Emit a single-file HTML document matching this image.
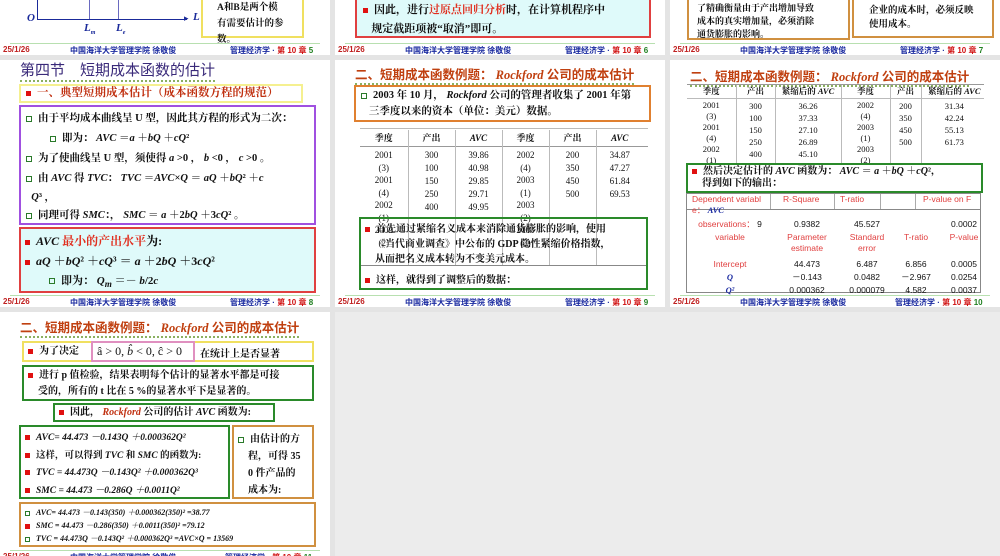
<!DOCTYPE html>
<html><head><meta charset="utf-8"><style>
*{margin:0;padding:0;box-sizing:border-box}
body{width:1000px;height:556px;background:#e4e4e4;position:relative;overflow:hidden;font-family:"Liberation Serif","Noto Serif CJK SC",serif;color:#111}
.s{position:absolute;background:#fff;overflow:hidden}
.a{position:absolute;white-space:nowrap}
.b{position:absolute}
.ft{position:absolute;font-family:"Liberation Sans","Noto Sans CJK SC",sans-serif;font-weight:bold;font-size:8px;white-space:nowrap}
.gl{position:absolute;height:1px;background:#b8e0b0}
.sq{display:inline-block;width:5px;height:5px;background:#e01010;margin-right:6px;vertical-align:middle}
.hq{display:inline-block;width:6px;height:6px;border:1px solid #2a7a2a;margin-right:6px;vertical-align:middle}
.title{position:absolute;font-family:"Liberation Serif","Noto Sans CJK SC",sans-serif;font-weight:bold;font-size:12.5px;color:#c04010;white-space:nowrap;border-bottom:2px dotted #8ab060}
i{font-style:italic}
table{border-collapse:collapse}
</style></head><body>

<!-- Row 1 -->
<div class="s" style="left:0;top:0;width:330px;height:55px">
 <div class="b" style="left:37px;top:0;width:1px;height:20px;background:#1a2a9a"></div>
 <div class="b" style="left:37px;top:19px;width:150px;height:1px;background:#1a2a9a"></div>
 <div class="a" style="left:184px;top:13px;font-size:9px;color:#1a2a9a">▸</div>
 <div class="b" style="left:89px;top:0;width:1px;height:19px;background:#6a6ac0"></div>
 <div class="b" style="left:118px;top:0;width:1px;height:19px;background:#6a6ac0"></div>
 <div class="a" style="left:27px;top:12px;font-size:11px;font-weight:bold;font-style:italic;color:#1a2a9a">O</div>
 <div class="a" style="left:193px;top:11px;font-size:11px;font-weight:bold;font-style:italic;color:#1a2a9a">L</div>
 <div class="a" style="left:84px;top:22px;font-size:11px;font-weight:bold;font-style:italic;color:#1a2a9a">L<sub style="font-size:6px">m</sub></div>
 <div class="a" style="left:116px;top:22px;font-size:11px;font-weight:bold;font-style:italic;color:#1a2a9a">L<sub style="font-size:6px">e</sub></div>
 <div class="b" style="left:201px;top:-3px;width:103px;height:41px;border:2px solid #f0e060;font-size:9.5px;font-weight:bold;padding:1px 14px;line-height:16px">A和B是两个模<br>有需要估计的参<br>数。</div>
 <div class="gl" style="left:10px;top:43px;width:310px"></div>
 <div class="ft" style="left:3px;top:45px;color:#c02020">25/1/26</div>
 <div class="ft" style="left:70px;top:45px;color:#1a2aa0">中国海洋大学管理学院 徐敬俊</div>
 <div class="ft" style="left:230px;top:45px;color:#1a2aa0">管理经济学 · <span style="color:#d01010">第 10 章</span> <span style="color:#208020">5</span></div>
</div>

<div class="s" style="left:335px;top:0;width:330px;height:55px">
 <div class="b" style="left:20px;top:-3px;width:296px;height:41px;border:2px solid #e04040;background:#dffafa;font-size:11px;font-weight:bold;padding:2px 6px;line-height:19px"><span class="sq"></span>因此，进行<span style="color:#e03020">过原点回归分析</span>时，在计算机程序中<br>&nbsp;&nbsp;&nbsp;规定截距项被“取消”即可。</div>
 <div class="gl" style="left:10px;top:43px;width:310px"></div>
 <div class="ft" style="left:3px;top:45px;color:#c02020">25/1/26</div>
 <div class="ft" style="left:70px;top:45px;color:#1a2aa0">中国海洋大学管理学院 徐敬俊</div>
 <div class="ft" style="left:230px;top:45px;color:#1a2aa0">管理经济学 · <span style="color:#d01010">第 10 章</span> <span style="color:#208020">6</span></div>
</div>

<div class="s" style="left:670px;top:0;width:330px;height:55px">
 <div class="b" style="left:17px;top:-3px;width:163px;height:43px;border:2px solid #d09040;font-size:9px;font-weight:bold;padding:3px 8px;line-height:13px">了精确衡量由于产出增加导致<br>成本的真实增加量，必须消除<br>通货膨胀的影响。</div>
 <div class="b" style="left:182px;top:-3px;width:142px;height:41px;border:2px solid #d09040;font-size:9.5px;font-weight:bold;padding:5px 15px;line-height:14px">企业的成本时，必须反映<br>使用成本。</div>
 <div class="gl" style="left:10px;top:43px;width:310px"></div>
 <div class="ft" style="left:3px;top:45px;color:#c02020">25/1/26</div>
 <div class="ft" style="left:70px;top:45px;color:#1a2aa0">中国海洋大学管理学院 徐敬俊</div>
 <div class="ft" style="left:230px;top:45px;color:#1a2aa0">管理经济学 · <span style="color:#d01010">第 10 章</span> <span style="color:#208020">7</span></div>
</div>

<!-- Slide 8 -->
<div class="s" style="left:0;top:60px;width:330px;height:247px">
 <div class="a" style="left:20px;top:2px;font-size:15px;color:#3a2a7a;font-family:'Liberation Sans','Noto Sans CJK SC',sans-serif;border-bottom:2px dotted #8ab060;line-height:18px">第四节　短期成本函数的估计</div>
 <div class="b" style="left:19px;top:24px;width:284px;height:19px;border:2px solid #f5f090;font-size:11.5px;font-weight:bold;color:#c03010;padding:0 5px;line-height:15px"><span class="sq"></span>一、典型短期成本估计（成本函数方程的规范）</div>
 <div class="b" style="left:19px;top:45px;width:297px;height:120px;border:2px solid #a050e0;font-size:10.5px;font-weight:bold;padding:2px 5px;line-height:20px">
  <div><span class="hq"></span>由于平均成本曲线呈 U 型，因此其方程的形式为二次：</div>
  <div style="padding-left:24px"><span class="hq"></span>即为： <i>AVC</i> ＝<i>a</i> ＋<i>bQ</i> ＋<i>cQ</i>²</div>
  <div><span class="hq"></span>为了使曲线呈 U 型，须使得 <i>a</i> &gt;0 ，  <i>b</i> &lt;0 ，  <i>c</i> &gt;0 。</div>
  <div><span class="hq"></span>由 <i>AVC</i> 得 <i>TVC</i>：  <i>TVC</i> ＝<i>AVC</i>×<i>Q</i> ＝ <i>aQ</i> ＋<i>bQ</i>² ＋<i>c</i></div>
  <div style="line-height:17px">&nbsp;&nbsp;<i>Q</i>³ ，</div>
  <div><span class="hq"></span>同理可得 <i>SMC</i>：，  <i>SMC</i> ＝ <i>a</i> ＋2<i>bQ</i> ＋3<i>cQ</i>² 。</div>
 </div>
 <div class="b" style="left:19px;top:167px;width:297px;height:66px;border:2px solid #e04040;background:#dffafa;font-size:12px;font-weight:bold;padding:2px 4px;line-height:20px">
  <div><span class="sq"></span><i>AVC</i> <span style="color:#e03020">最小的产出水平</span>为:</div>
  <div><span class="sq"></span><i>aQ</i> ＋<i>bQ</i>² ＋<i>cQ</i>³ ＝ <i>a</i> ＋2<i>bQ</i> ＋3<i>cQ</i>²</div>
  <div style="padding-left:24px;font-size:11px"><span class="hq"></span>即为：  <i>Q<sub>m</sub></i> ＝－ <i>b</i>/2<i>c</i></div>
 </div>
 <div class="gl" style="left:10px;top:235px;width:310px"></div>
 <div class="ft" style="left:3px;top:237px;color:#c02020">25/1/26</div>
 <div class="ft" style="left:70px;top:237px;color:#1a2aa0">中国海洋大学管理学院 徐敬俊</div>
 <div class="ft" style="left:230px;top:237px;color:#1a2aa0">管理经济学 · <span style="color:#d01010">第 10 章</span> <span style="color:#208020">8</span></div>
</div>

<!-- Slide 9 -->
<div class="s" style="left:335px;top:60px;width:330px;height:247px">
 <div class="title" style="left:20px;top:4px">二、短期成本函数例题： <i>Rockford</i> 公司的成本估计</div>
 <div class="b" style="left:19px;top:25px;width:297px;height:37px;border:2px solid #e08030;font-size:10.5px;font-weight:bold;padding:1px 5px;line-height:16px"><span class="hq"></span>2003 年 10 月， <i>Rockford</i> 公司的管理者收集了 2001 年第<br>&nbsp;&nbsp;&nbsp;三季度以来的资本（单位：美元）数据。</div>
 <div class="b" style="left:25px;top:68px;width:288px;height:1px;background:#bbb"></div>
 <div class="b" style="left:25px;top:86px;width:288px;height:1px;background:#999"></div>
 <div class="b" style="left:25px;top:205px;width:288px;height:1px;background:#888"></div>
 <div class="a" style="left:25px;top:70px;font-size:9px">
  <table style="font-size:9px;line-height:12.5px;text-align:center">
   <tr style="font-weight:bold;height:17px"><td style="width:48px">季度</td><td style="width:47px;border-left:1px solid #bbb">产出</td><td style="width:47px;border-left:1px solid #bbb"><i>AVC</i></td><td style="width:47px;border-left:1px solid #bbb">季度</td><td style="width:47px;border-left:1px solid #bbb">产出</td><td style="width:47px;border-left:1px solid #bbb"><i>AVC</i></td></tr>
   <tr><td style="vertical-align:top;padding-top:2px">2001<br>(3)<br>2001<br>(4)<br>2002<br>(1)<br>2002<br>(2)</td>
   <td style="border-left:1px solid #bbb;vertical-align:top;padding-top:2px;line-height:13px">300<br>100<br>150<br>250<br>400</td>
   <td style="border-left:1px solid #bbb;vertical-align:top;padding-top:2px;line-height:13px">39.86<br>40.98<br>29.85<br>29.71<br>49.95</td>
   <td style="border-left:1px solid #bbb;vertical-align:top;padding-top:2px">2002<br>(4)<br>2003<br>(1)<br>2003<br>(2)<br>2003<br>(3)</td>
   <td style="border-left:1px solid #bbb;vertical-align:top;padding-top:2px;line-height:13px">200<br>350<br>450<br>500</td>
   <td style="border-left:1px solid #bbb;vertical-align:top;padding-top:2px;line-height:13px;height:118px">34.87<br>47.27<br>61.84<br>69.53</td></tr>
  </table>
 </div>
 <div class="b" style="left:24px;top:157px;width:289px;height:73px;border:2px solid #2a8a2a;font-size:10px;font-weight:bold;padding:3px 4px;line-height:15px"><span class="sq"></span>首先通过紧缩名义成本来消除通货膨胀的影响，使用<br>&nbsp;&nbsp;&nbsp;&nbsp;《当代商业调查》中公布的 GDP 隐性紧缩价格指数，<br>&nbsp;&nbsp;&nbsp;&nbsp;从而把名义成本转为不变美元成本。<div style="margin-top:6px"><span class="sq"></span>这样，就得到了调整后的数据：</div></div>
 <div class="gl" style="left:10px;top:235px;width:310px"></div>
 <div class="ft" style="left:3px;top:237px;color:#c02020">25/1/26</div>
 <div class="ft" style="left:70px;top:237px;color:#1a2aa0">中国海洋大学管理学院 徐敬俊</div>
 <div class="ft" style="left:230px;top:237px;color:#1a2aa0">管理经济学 · <span style="color:#d01010">第 10 章</span> <span style="color:#208020">9</span></div>
</div>

<!-- Slide 10 -->
<div class="s" style="left:670px;top:60px;width:330px;height:247px">
 <div class="title" style="left:20px;top:6px">二、短期成本函数例题： <i>Rockford</i> 公司的成本估计</div>
 <div class="b" style="left:17px;top:24px;width:297px;height:1px;background:#999"></div>
 <div class="b" style="left:17px;top:38px;width:297px;height:1px;background:#bbb"></div>
 <div class="a" style="left:17px;top:25px">
  <table style="font-size:8.5px;line-height:11px;text-align:center">
   <tr style="font-weight:bold;height:13px"><td style="width:49px">季度</td><td style="width:39px;border-left:1px solid #bbb">产出</td><td style="width:66px;border-left:1px solid #bbb">紧缩后的 <i>AVC</i></td><td style="width:49px;border-left:1px solid #bbb">季度</td><td style="width:31px;border-left:1px solid #bbb">产出</td><td style="width:66px;border-left:1px solid #bbb">紧缩后的 <i>AVC</i></td></tr>
   <tr><td style="vertical-align:top;padding-top:2px">2001<br>(3)<br>2001<br>(4)<br>2002<br>(1)</td>
   <td style="border-left:1px solid #bbb;vertical-align:top;padding-top:2px;line-height:12px">300<br>100<br>150<br>250<br>400</td>
   <td style="border-left:1px solid #bbb;vertical-align:top;padding-top:2px;line-height:12px">36.26<br>37.33<br>27.10<br>26.89<br>45.10</td>
   <td style="border-left:1px solid #bbb;vertical-align:top;padding-top:2px">2002<br>(4)<br>2003<br>(1)<br>2003<br>(2)</td>
   <td style="border-left:1px solid #bbb;vertical-align:top;padding-top:2px;line-height:12px">200<br>350<br>450<br>500</td>
   <td style="border-left:1px solid #bbb;vertical-align:top;padding-top:2px;line-height:12px;height:64px">31.34<br>42.24<br>55.13<br>61.73</td></tr>
  </table>
 </div>
 <div class="b" style="left:16px;top:103px;width:297px;height:30px;border:2px solid #2a8a2a;font-size:10px;font-weight:bold;padding:1px 4px;line-height:12px;background:#fff"><span class="sq"></span>然后决定估计的 <i>AVC</i> 函数为： <i>AVC</i> ＝ <i>a</i> ＋<i>bQ</i> ＋<i>cQ</i>²，<br>&nbsp;&nbsp;&nbsp;&nbsp;得到如下的输出：</div>
 <div class="b" style="left:16px;top:133px;width:295px;height:100px;border:1px solid #888"></div>
 <div class="b" style="left:16px;top:149px;width:295px;height:1px;background:#888"></div>
 <div class="a" style="left:22px;top:134px;font-family:'Liberation Sans',sans-serif;font-size:8.5px;line-height:11px;color:#e04040">Dependent variabl<br>e： <b style="color:#1a2aa0;font-style:italic;font-family:'Liberation Serif',serif">AVC</b></div>
 <div class="a" style="left:113px;top:134px;font-family:'Liberation Sans',sans-serif;font-size:8.5px;color:#e04040">R-Square</div>
 <div class="a" style="left:170px;top:134px;font-family:'Liberation Sans',sans-serif;font-size:8.5px;color:#e04040">T-ratio</div>
 <div class="a" style="left:253px;top:134px;font-family:'Liberation Sans',sans-serif;font-size:8.5px;color:#e04040">P-value on F</div>
 <div class="b" style="left:100px;top:134px;width:1px;height:15px;background:#aaa"></div>
 <div class="b" style="left:164px;top:134px;width:1px;height:15px;background:#aaa"></div>
 <div class="b" style="left:210px;top:134px;width:1px;height:15px;background:#aaa"></div>
 <div class="b" style="left:245px;top:134px;width:1px;height:15px;background:#aaa"></div>
 <div style="position:absolute;left:16px;top:157px;font-family:'Liberation Sans',sans-serif;font-size:8.5px;line-height:11px">
  <table style="text-align:center;font-size:8.5px">
   <tr style="height:15px"><td style="width:88px;color:#e04040">observations： <span style="color:#111">9</span></td><td style="width:66px">0.9382</td><td style="width:54px">45.527</td><td style="width:44px"></td><td style="width:52px">0.0002</td></tr>
   <tr style="color:#e04040;height:26px;vertical-align:top"><td>variable</td><td>Parameter<br>estimate</td><td>Standard<br>error</td><td>T-ratio</td><td>P-value</td></tr>
   <tr style="height:13px"><td style="color:#e04040">Intercept</td><td>44.473</td><td>6.487</td><td>6.856</td><td>0.0005</td></tr>
   <tr style="height:13px"><td style="color:#1a2aa0;font-weight:bold;font-style:italic;font-family:'Liberation Serif',serif">Q</td><td>－0.143</td><td>0.0482</td><td>－2.967</td><td>0.0254</td></tr>
   <tr style="height:13px"><td style="color:#1a2aa0;font-weight:bold;font-style:italic;font-family:'Liberation Serif',serif">Q²</td><td>0.000362</td><td>0.000079</td><td>4.582</td><td>0.0037</td></tr>
  </table>
 </div>
 <div class="gl" style="left:10px;top:235px;width:310px"></div>
 <div class="ft" style="left:3px;top:237px;color:#c02020">25/1/26</div>
 <div class="ft" style="left:70px;top:237px;color:#1a2aa0">中国海洋大学管理学院 徐敬俊</div>
 <div class="ft" style="left:225px;top:237px;color:#1a2aa0">管理经济学 · <span style="color:#d01010">第 10 章</span> <span style="color:#208020">10</span></div>
</div>

<!-- Slide 11 -->
<div class="s" style="left:0;top:312px;width:330px;height:244px">
 <div class="title" style="left:20px;top:5px">二、短期成本函数例题： <i>Rockford</i> 公司的成本估计</div>
 <div class="b" style="left:22px;top:29px;width:292px;height:21px;border:2px solid #f0e060;font-size:10px;font-weight:bold;padding:0 4px;line-height:17px"><span class="sq"></span>为了决定</div>
 <div class="b" style="left:91px;top:29px;width:104px;height:21px;border:2px solid #e090c0;background:#fff;font-size:12px;padding:0 4px;line-height:17px;white-space:nowrap">â &gt; 0, <span style="font-style:italic">b̂</span> &lt; 0, ĉ &gt; 0</div>
 <div class="a" style="left:200px;top:33px;font-size:10px;font-weight:bold">在统计上是否显著</div>
 <div class="b" style="left:22px;top:53px;width:292px;height:36px;border:2px solid #2a8a2a;font-size:10px;font-weight:bold;padding:1px 4px;line-height:16px"><span class="sq"></span>进行 p 值检验，结果表明每个估计的显著水平都是可接<br>&nbsp;&nbsp;&nbsp;&nbsp;受的，所有的 t 比在 5 %的显著水平下是显著的。</div>
 <div class="b" style="left:53px;top:91px;width:222px;height:19px;border:2px solid #2a8a2a;font-size:10px;font-weight:bold;padding:0 4px;line-height:15px"><span class="sq"></span>因此， <i style="color:#c03010">Rockford</i> 公司的估计 <i>AVC</i> 函数为:</div>
 <div class="b" style="left:19px;top:113px;width:211px;height:74px;border:2px solid #2a8a2a;font-size:9.5px;font-weight:bold;padding:3px 4px;line-height:17.5px">
  <div><span class="sq"></span><i>AVC</i>= <i>44.473 －0.143Q ＋0.000362Q²</i></div>
  <div><span class="sq"></span>这样，可以得到 <i>TVC</i> 和 <i>SMC</i> 的函数为:</div>
  <div><span class="sq"></span><i>TVC = 44.473Q －0.143Q² ＋0.000362Q³</i></div>
  <div><span class="sq"></span><i>SMC = 44.473 －0.286Q ＋0.0011Q²</i></div>
 </div>
 <div class="b" style="left:232px;top:113px;width:82px;height:74px;border:2px solid #d09040;font-size:10px;font-weight:bold;padding:4px 4px;line-height:17px"><span class="hq"></span>由估计的方<br>&nbsp;&nbsp;&nbsp;&nbsp;程，可得 35<br>&nbsp;&nbsp;&nbsp;&nbsp;0 件产品的<br>&nbsp;&nbsp;&nbsp;&nbsp;成本为:</div>
 <div class="b" style="left:19px;top:190px;width:297px;height:45px;border:2px solid #d09040;font-size:8px;font-weight:bold;font-style:italic;padding:2px 4px;line-height:13px">
  <div><span class="hq" style="width:5px;height:5px"></span>AVC= 44.473 －0.143(350) ＋0.000362(350)² =38.77</div>
  <div><span class="sq"></span>SMC = 44.473 －0.286(350) ＋0.0011(350)² =79.12</div>
  <div><span class="hq" style="width:5px;height:5px"></span>TVC = 44.473Q －0.143Q² ＋0.000362Q³ =AVC×Q = 13569</div>
 </div>
 <div class="gl" style="left:10px;top:238px;width:310px"></div>
 <div class="ft" style="left:3px;top:240px;color:#c02020">25/1/26</div>
 <div class="ft" style="left:70px;top:240px;color:#1a2aa0">中国海洋大学管理学院 徐敬俊</div>
 <div class="ft" style="left:225px;top:240px;color:#1a2aa0">管理经济学 · <span style="color:#d01010">第 10 章</span> <span style="color:#208020">11</span></div>
</div>

<div class="b" style="left:335px;top:312px;width:665px;height:244px;background:#ececec"></div>
</body></html>
